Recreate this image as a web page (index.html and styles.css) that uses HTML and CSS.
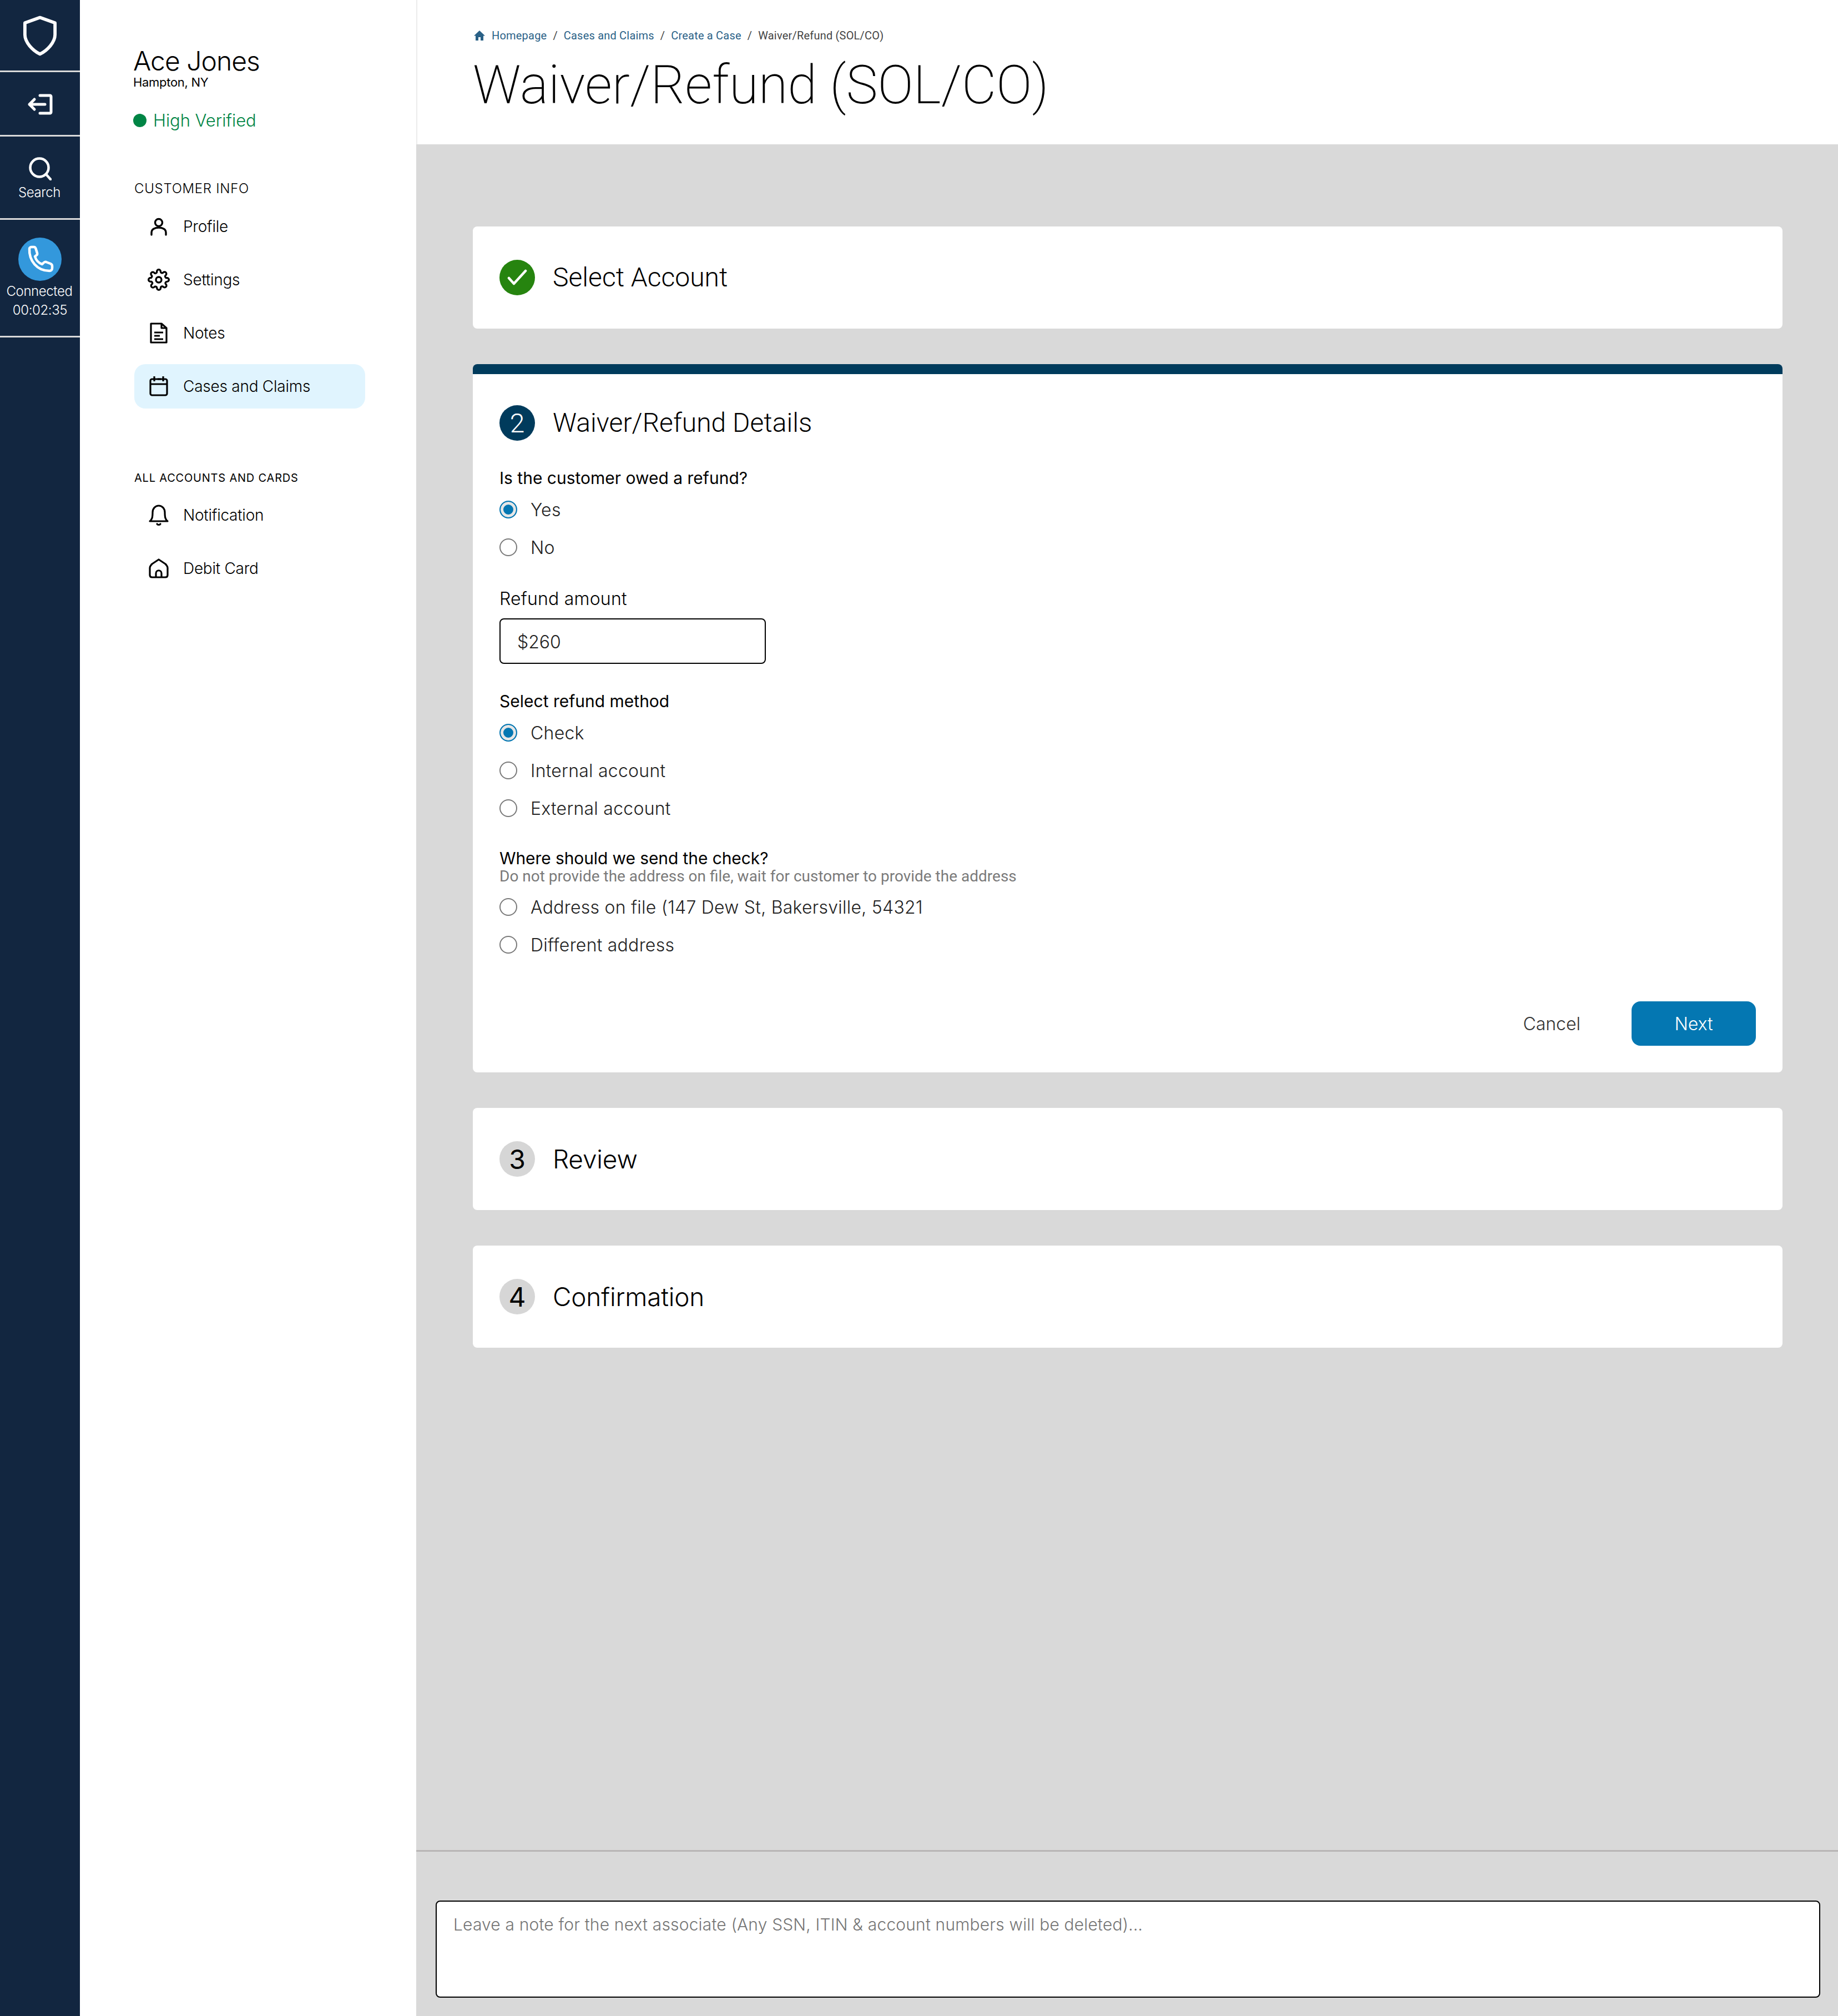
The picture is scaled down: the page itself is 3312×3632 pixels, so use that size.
FILE: index.html
```html
<!DOCTYPE html>
<html lang="en">
<head>
<meta charset="utf-8">
<title>Waiver/Refund (SOL/CO)</title>
<link rel="stylesheet" href="styles.css">
</head>
<body>
<div class="app">
  <nav class="rail">
    <div class="rail-sec rail-logo">
      <svg class="i-shield" viewBox="0 0 64 76" fill="none" stroke="#fff" stroke-width="6" stroke-linejoin="round"><path d="M32 4 60 14V36C60 50 46 65 32 72 18 65 4 50 4 36V14Z"/></svg>
    </div>
    <div class="rail-sec rail-exit">
      <svg class="i-exit" viewBox="0 0 46 38" fill="none" stroke="#fff" stroke-width="5" stroke-linecap="round" stroke-linejoin="round"><path d="M23 3H41a2 2 0 0 1 2 2V33a2 2 0 0 1-2 2H23"/><path d="M32 19H4M13 10 4 19 13 28"/></svg>
    </div>
    <div class="rail-sec rail-search">
      <svg class="i-search" viewBox="0 0 42 42" fill="none" stroke="#fff" stroke-width="4.5" stroke-linecap="round"><circle cx="20" cy="19" r="16.5"/><path d="M32 31 40 40"/></svg>
      <span class="rail-label">Search</span>
    </div>
    <div class="rail-sec rail-call">
      <span class="phone-dot">
        <svg class="i-phone" viewBox="0 0 50 50" fill="none" stroke="#fff" stroke-width="4.5" stroke-linejoin="round"><path d="M6 6C6 4 8 3 10 3H14C16 3 17 4 17.5 6L20 14C20.5 16 20 17 18.5 18L16 20C18 27 23 32 29 34L32 31C33.5 30 34.5 29.5 36 30L44 33C46 34 47 35 47 37V41C47 44 45 46 42 46 20 46 5 28 6 6Z"/></svg>
      </span>
      <span class="rail-label call-l1">Connected</span>
      <span class="rail-label call-l2">00:02:35</span>
    </div>
  </nav>

  <aside class="side">
    <h2 class="cust-name">Ace Jones</h2>
    <p class="cust-loc">Hampton, NY</p>
    <p class="verified"><span class="v-dot"></span>High Verified</p>

    <h3 class="nav-head">CUSTOMER INFO</h3>
    <ul class="nav">
      <li class="nav-item">
        <svg class="nav-icon" viewBox="0 0 40 40" fill="none" stroke="#000" stroke-width="3.4" stroke-linecap="round"><circle cx="20" cy="13" r="6.5"/><path d="M7 35V31C7 25 13 22 20 22S33 25 33 31V35"/></svg>
        Profile</li>
      <li class="nav-item">
        <svg class="nav-icon" viewBox="0 0 24 24" fill="none" stroke="#000" stroke-width="2" stroke-linejoin="round"><circle cx="12" cy="12" r="3"/><path d="M19.4 15a1.65 1.65 0 0 0 .33 1.82l.06.06a2 2 0 1 1-2.83 2.83l-.06-.06a1.65 1.65 0 0 0-2.82 1.17V21a2 2 0 1 1-4 0v-.09a1.65 1.65 0 0 0-2.82-1.12l-.06.06a2 2 0 1 1-2.83-2.83l.06-.06A1.65 1.65 0 0 0 3.09 14H3a2 2 0 1 1 0-4h.09a1.65 1.65 0 0 0 1.12-2.82l-.06-.06a2 2 0 1 1 2.83-2.83l.06.06A1.65 1.65 0 0 0 10 3.09V3a2 2 0 1 1 4 0v.09a1.65 1.65 0 0 0 2.82 1.12l.06-.06a2 2 0 1 1 2.83 2.83l-.06.06A1.65 1.65 0 0 0 20.91 10H21a2 2 0 1 1 0 4h-.09a1.65 1.65 0 0 0-1.51 1Z"/></svg>
        Settings</li>
      <li class="nav-item">
        <svg class="nav-icon" viewBox="0 0 40 40" fill="none" stroke="#000" stroke-width="3.2" stroke-linejoin="round"><path d="M6 3H25L34 11V37H6Z"/><path d="M25 3V11H34"/><path d="M12 19H28M12 25H22M12 31H28"/></svg>
        Notes</li>
      <li class="nav-item is-active">
        <svg class="nav-icon" viewBox="0 0 40 40" fill="none" stroke="#000" stroke-width="3.2" stroke-linejoin="round"><rect x="5" y="7" width="30" height="29" rx="3"/><path d="M5 16H35M12 2V11M28 2V11M18 7H24"/></svg>
        Cases and Claims</li>
    </ul>

    <h3 class="nav-head nav-head-sm">ALL ACCOUNTS AND CARDS</h3>
    <ul class="nav nav-2">
      <li class="nav-item">
        <svg class="nav-icon" viewBox="0 0 40 40" fill="none" stroke="#000" stroke-width="3.2" stroke-linejoin="round" stroke-linecap="round"><path d="M4 31C8 28 9 24 9 15 9 8 14 3 20 3S31 8 31 15C31 24 32 28 36 31Z"/><path d="M17 36C18 38 22 38 23 36"/></svg>
        Notification</li>
      <li class="nav-item">
        <svg class="nav-icon" viewBox="0 0 40 40" fill="none" stroke="#000" stroke-width="3.2" stroke-linejoin="round"><path d="M20 4 32 12C34 14 36 16 36 19V32C36 35 34 36 32 36H8C6 36 4 35 4 32V19C4 16 6 14 8 12Z"/><path d="M15 36V29C15 22 25 22 25 29V36"/></svg>
        Debit Card</li>
    </ul>
  </aside>

  <main class="main">
    <header class="page-head">
      <div class="crumbs">
        <svg class="i-home" viewBox="0 0 20 20" fill="#2a6187"><path d="M10 1 20 10.5H17V19H12V13H8V19H3V10.5H0Z"/></svg>
        <a class="crumb">Homepage</a><span class="sep">/</span>
        <a class="crumb">Cases and Claims</a><span class="sep">/</span>
        <a class="crumb">Create a Case</a><span class="sep">/</span>
        <span class="crumb-cur">Waiver/Refund (SOL/CO)</span>
      </div>
      <h1 class="page-title">Waiver/Refund (SOL/CO)</h1>
    </header>

    <section class="content">
      <article class="card card-closed">
        <span class="step step-done">
          <svg class="i-check" viewBox="0 0 36 30" fill="none" stroke="#fff" stroke-width="4.5" stroke-linecap="round" stroke-linejoin="round"><path d="M3 16 12 26 33 3"/></svg>
        </span>
        <h2 class="step-title roboto">Select Account</h2>
      </article>

      <article class="card card-open">
        <div class="card-bar"></div>
        <div class="card-body">
          <div class="open-head">
            <span class="step step-cur">2</span>
            <h2 class="step-title roboto">Waiver/Refund Details</h2>
          </div>

          <p class="q q1">Is the customer owed a refund?</p>
          <div class="radio r-first"><span class="dot on"></span>Yes</div>
          <div class="radio"><span class="dot"></span>No</div>

          <p class="q q-amt">Refund amount</p>
          <div class="amt">$260</div>

          <p class="q q-method">Select refund method</p>
          <div class="radio r-first"><span class="dot on"></span>Check</div>
          <div class="radio"><span class="dot"></span>Internal account</div>
          <div class="radio"><span class="dot"></span>External account</div>

          <p class="q q-where">Where should we send the check?</p>
          <p class="hint">Do not provide the address on file, wait for customer to provide the address</p>
          <div class="radio r-addr"><span class="dot"></span>Address on file (147 Dew St, Bakersville, 54321</div>
          <div class="radio"><span class="dot"></span>Different address</div>

          <div class="actions">
            <button class="btn-cancel">Cancel</button>
            <button class="btn-next">Next</button>
          </div>
        </div>
      </article>

      <article class="card card-closed">
        <span class="step step-todo">3</span>
        <h2 class="step-title inter-t">Review</h2>
      </article>

      <article class="card card-closed">
        <span class="step step-todo">4</span>
        <h2 class="step-title inter-t">Confirmation</h2>
      </article>
    </section>

    <footer class="note-bar">
      <div class="note">Leave a note for the next associate (Any SSN, ITIN &amp; account numbers will be deleted)...</div>
    </footer>
  </main>
</div>
</body>
</html>
```

FILE: styles.css
```css
* { box-sizing: border-box; }
html, body { margin: 0; padding: 0; }
body { font-family: Inter, "Noto Sans", sans-serif; color: #000; background: #fff; }
h1, h2, h3, p, ul { margin: 0; padding: 0; font-weight: 400; }
ul { list-style: none; }

.app { display: flex; width: 3312px; height: 3632px; overflow: hidden; }

/* rail */
.rail { width: 144px; flex: none; background: #122640; color: #fff; }
.rail-sec { display: flex; flex-direction: column; align-items: center; border-bottom: 3px solid #d9d9d9; }
.rail-logo { height: 130px; padding-top: 27px; }
.i-shield { width: 62px; height: 75px; }
.rail-exit { height: 116px; padding-top: 39px; }
.i-exit { width: 46px; height: 38px; }
.rail-search { height: 150px; padding-top: 37px; }
.i-search { width: 42px; height: 42px; }
.rail-label { font-size: 24px; line-height: 34px; letter-spacing: -0.4px; font-weight: 300; }
.rail-search .rail-label { margin-top: 5px; margin-left: -2px; }
.rail-call { height: 212px; padding-top: 32px; width: 146px; border-right: 2px solid #d9d9d9; }
.phone-dot { width: 78px; height: 78px; border-radius: 50%; background: #3398dc; display: flex; align-items: center; justify-content: center; }
.i-phone { width: 50px; height: 50px; }
.call-l1 { margin-top: 2px; margin-left: -2px; }

/* side */
.side { width: 606px; flex: none; padding: 81px 92px 0 96px; background: #fff; }
.cust-name { font-size: 48px; line-height: 58px; letter-spacing: -1px; font-weight: 300; }
.cust-loc { font-size: 22px; line-height: 24px; letter-spacing: -0.3px; margin-top: -3px; }
.verified { display: flex; align-items: center; gap: 12px; font-size: 31px; line-height: 40px; color: #008545; margin-top: 37px; letter-spacing: -0.05px; font-weight: 300; }
.v-dot { width: 24px; height: 24px; border-radius: 50%; background: #008545; flex: none; }
.nav-head { font-size: 24px; line-height: 30px; letter-spacing: 0.7px; margin: 88px 0 0 2px; font-weight: 300; }
.nav-head-sm { font-size: 20px; letter-spacing: 0.8px; margin-top: 110px; font-weight: 400; }
.nav { margin: 13px 0 0 2px; }
.nav-2 { margin-top: 12px; }
.nav-item { display: flex; align-items: center; height: 80px; padding-left: 24px; gap: 24px; font-size: 28px; letter-spacing: -0.25px; border-radius: 20px; font-weight: 300; }
.nav-item + .nav-item { margin-top: 16px; }
.nav-icon { width: 40px; height: 40px; flex: none; }
.is-active { background: #e0f4fe; }

/* main */
.main { flex: 1; display: flex; flex-direction: column; background: #d9d9d9; min-width: 0; }
.page-head { height: 260px; background: #fff; border-left: 2px solid #ececec; padding: 50px 0 0 100px; }
.crumbs { display: flex; align-items: center; font-family: Roboto, sans-serif; font-size: 20px; line-height: 28px; letter-spacing: 0.2px; }
.i-home { width: 20px; height: 20px; margin: 0 12px 0 2px; }
.crumb { color: #2a6187; }
.crumb-cur { color: #444; }
.sep { color: #444; margin: 0 11px; }
.page-title { font-family: Roboto, sans-serif; font-weight: 200; font-size: 96px; line-height: 112px; margin-top: 19px; }

.content { flex: 1; padding: 148px 100px 0 102px; display: flex; flex-direction: column; gap: 64px; }
.card { background: #fff; border-radius: 8px; overflow: hidden; }
.card-closed { height: 184px; display: flex; align-items: center; padding-left: 48px; gap: 32px; }
.step { width: 64px; height: 64px; border-radius: 50%; flex: none; display: flex; align-items: center; justify-content: center; font-size: 48px; }
.step-done { background: #26840f; }
.i-check { width: 36px; height: 30px; }
.step-cur { background: #003b5c; color: #fff; font-family: Roboto, sans-serif; font-weight: 300; }
.step-todo { background: #d6d6d6; font-weight: 400; }
.step-title { font-size: 48px; font-weight: 300; line-height: 64px; }
.roboto { font-family: Roboto, sans-serif; font-weight: 300; }
.inter-t { font-size: 46px; font-weight: 300; letter-spacing: -0.2px; }

.card-open { height: 1276px; }
.card-bar { height: 18px; background: #003b5c; }
.card-body { padding: 56px 48px 0; }
.open-head { display: flex; align-items: center; gap: 32px; height: 64px; }

.q { font-size: 30px; line-height: 40px; }
.q1 { margin-top: 47px; }
.q-amt { margin-top: 39px; font-size: 32px; font-weight: 300; letter-spacing: 0.2px; }
.q-method { margin-top: 47px; }
.q-where { margin-top: 36px; letter-spacing: -0.1px; }
.hint { font-family: Roboto, sans-serif; font-size: 28px; line-height: 32px; color: #7a7a7a; margin-top: -3px; }
.radio { display: flex; align-items: center; height: 68px; gap: 24px; font-size: 32px; color: #222; letter-spacing: 0.25px; font-weight: 300; }
.r-first { margin-top: 3px; }
.r-addr { margin-top: 5px; }
.dot { width: 32px; height: 32px; border-radius: 50%; border: 2px solid #7a7a7a; background: #fff; flex: none; }
.dot.on { border-color: #0477b2; background: #0477b2; box-shadow: inset 0 0 0 5px #e6e6e6; }
.amt { width: 480px; height: 82px; border: 2px solid #000; border-radius: 8px; margin-top: 15px; padding: 2px 0 0 30px; display: flex; align-items: center; font-size: 32px; color: #222; font-weight: 300; }

.actions { display: flex; justify-content: flex-end; align-items: center; margin-top: 68px; gap: 92px; }
.btn-cancel { border: 0; background: none; padding: 0; font: 300 32px Inter, sans-serif; color: #333; }
.btn-next { width: 224px; height: 80px; border: 0; border-radius: 16px; background: #0477b2; color: #fff; font: 300 32px Inter, sans-serif; }

.note-bar { height: 299px; border-top: 3px solid #b8b5b5; padding: 88px 32px 0 35px; }
.note { height: 175px; border: 2px solid #000; border-radius: 8px; background: #fff; padding: 22px 30px; font-size: 30px; line-height: 38px; letter-spacing: 0.16px; color: #757575; font-weight: 300; }
```
